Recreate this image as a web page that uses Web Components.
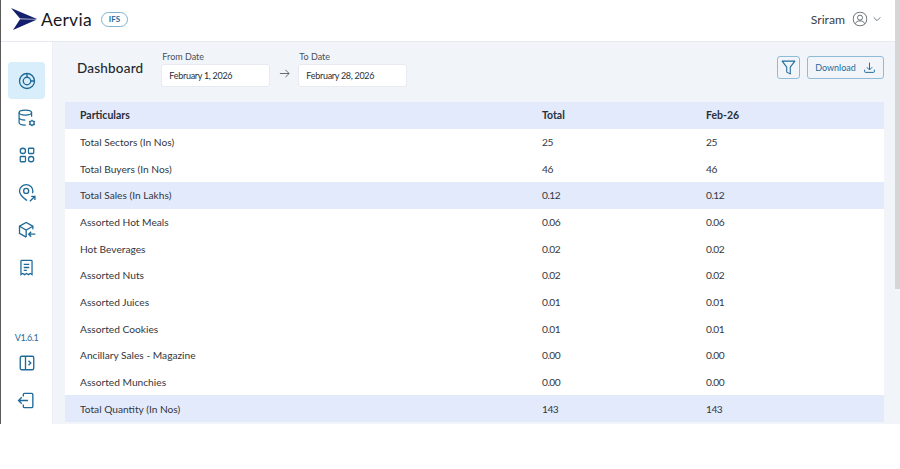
<!DOCTYPE html>
<html>
<head>
<meta charset="utf-8">
<title>Aervia Dashboard</title>
<style>
  html, body { margin: 0; height: 100%; background: #fff; overflow: hidden; }
  body { font-family: "Lato", "Liberation Sans", sans-serif; color: #2b2f36; }
</style>
</head>
<body>
<app-shell>
  <app-header slot="header"></app-header>
  <side-nav slot="nav"></side-nav>
  <dashboard-toolbar></dashboard-toolbar>
  <report-table></report-table>
</app-shell>

<script>
const ICONS = {
  logo: '<svg width="28" height="22" viewBox="0 0 28 22"><path d="M1 0 L27 11 L10 10.4 Z" fill="#14206e"/><path d="M27 11.400 L3 22 L10 11.200 Z" fill="#14206e"/></svg>',
  chart: '<svg viewBox="0 0 24 24" width="20" height="20" fill="none" stroke="currentColor" stroke-width="1.6"><circle cx="12" cy="12" r="9"/><circle cx="12" cy="12" r="4.500"/><path d="M12 3v4.500M16.500 12H21"/></svg>',
  database: '<svg viewBox="0 0 24 24" width="20" height="20" fill="none" stroke="currentColor" stroke-width="1.5"><ellipse cx="10" cy="5.500" rx="7.500" ry="3"/><path d="M2.500 5.500v12c0 1.700 3 3 7 3h1M17.500 5.500v5M2.500 11.500c0 1.700 3.300 3 7.500 3"/><circle cx="18" cy="18" r="2.500"/><path d="M18 14v1.500M18 20.500V22M14.500 16l1.300.800M20.200 19.200l1.300.800M14.500 20l1.300-.800M20.200 16.800l1.300-.800"/></svg>',
  grid: '<svg viewBox="0 0 24 24" width="18" height="18" fill="none" stroke="currentColor" stroke-width="1.700"><circle cx="6.500" cy="6.500" r="3.500"/><rect x="14" y="3" width="7" height="7" rx="1"/><rect x="3" y="14" width="7" height="7" rx="1"/><circle cx="17.500" cy="17.500" r="3.500"/></svg>',
  pin: '<svg viewBox="0 0 24 24" width="20" height="20" fill="none" stroke="currentColor" stroke-width="1.600"><path d="M12 21c-2-1.500-9-6-9-11.500C3 5 7 2 11 2c4.500 0 8 3.300 8 7.500 0 1-.2 2-.5 2.800"/><circle cx="11" cy="9.500" r="3"/><path d="M15.500 22l6-6M17 16h4.500v4.500"/></svg>',
  box: '<svg viewBox="0 0 24 24" width="20" height="20" fill="none" stroke="currentColor" stroke-width="1.600"><path d="M19 11V7.500L11 3 3 7.500v8.500l8 4.500"/><path d="M3 7.500l8 4.500 8-4.500M11 12v8.500"/><path d="M22 17h-8M17 14l-3 3 3 3"/></svg>',
  receipt: '<svg viewBox="0 0 24 24" width="19" height="19" fill="none" stroke="currentColor" stroke-width="1.600"><path d="M5 21V4a1 1 0 0 1 1-1h12a1 1 0 0 1 1 1v17l-2.300-1.500L14.300 21 12 19.500 9.700 21l-2.400-1.500z"/><path d="M8.500 8h7M8.500 12h7M8.500 15.500h4"/></svg>',
  panel: '<svg viewBox="0 0 24 24" width="18" height="18" fill="none" stroke="currentColor" stroke-width="1.800"><rect x="3" y="3" width="18" height="18" rx="2"/><path d="M10 3v18M14 9l3 3-3 3"/></svg>',
  logout: '<svg viewBox="0 0 24 24" width="19" height="19" fill="none" stroke="currentColor" stroke-width="1.700"><path d="M8 7V4.500A1.500 1.500 0 0 1 9.500 3h9A1.500 1.500 0 0 1 20 4.500v15a1.500 1.500 0 0 1-1.500 1.500h-9A1.500 1.500 0 0 1 8 19.500V17"/><path d="M14 12H2M6 8l-4 4 4 4"/></svg>',
  user: '<svg viewBox="0 0 24 24" width="16" height="16" fill="none" stroke="#555b63" stroke-width="1.300"><rect x="2" y="2" width="20" height="20" rx="9"/><circle cx="12" cy="10" r="3.800"/><path d="M5 19c1.200-3 4-4.200 7-4.200s5.800 1.200 7 4.200"/></svg>',
  chevron: '<svg viewBox="0 0 12 12" width="10" height="10" fill="none" stroke="#666c74" stroke-width="1.100"><path d="M2 4l4 4 4-4"/></svg>',
  filter: '<svg viewBox="0 0 24 24" width="17" height="17" fill="none" stroke="#1f6a99" stroke-width="1.500" stroke-linejoin="round"><path d="M3 3h18l-6.500 8.500V21l-5-2.500v-7z"/></svg>',
  download: '<svg viewBox="0 0 24 24" width="13" height="13" fill="none" stroke="#1f6a99" stroke-width="1.800"><path d="M12 3v13M7 11.500l5 5 5-5M3 16v3.500A1.500 1.500 0 0 0 4.500 21h15a1.500 1.500 0 0 0 1.500-1.500V16"/></svg>',
  arrow: '<svg viewBox="0 0 24 24" width="11" height="11" fill="none" stroke="#4a4f57" stroke-width="1.800"><path d="M2 12h20M14 4l8 8-8 8"/></svg>'
};

class AppShell extends HTMLElement {
  constructor() {
    super();
    this.attachShadow({ mode: 'open' });
    this.shadowRoot.innerHTML = `
      <style>
        :host { display: block; height: 424px; border-left: 1px solid #5a5a5a; box-sizing: border-box; position: relative; }
        .frame { display: grid; grid-template-rows: 42px 1fr; height: 100%; }
        .body { display: grid; grid-template-columns: 52px 1fr; min-height: 0; overflow: hidden; }
        main { background: #f1f5fa; padding: 0 16px 0 12px; overflow: hidden; min-width: 0; }
        .scroll { position: absolute; right: 0; top: 0; width: 5px; height: 289px; background: #d6d6d6; }
      </style>
      <div class="frame">
        <slot name="header"></slot>
        <div class="body">
          <slot name="nav"></slot>
          <main><slot></slot></main>
        </div>
      </div>
      <div class="scroll"></div>`;
  }
}

class AppHeader extends HTMLElement {
  constructor() {
    super();
    this.attachShadow({ mode: 'open' });
    this.shadowRoot.innerHTML = `
      <style>
        :host { display: flex; align-items: center; justify-content: space-between; background: #fff; border-bottom: 1px solid #e6eaf0; padding: 0 18px 3px 9px; box-sizing: border-box; height: 42px; }
        .brand, .user { display: flex; align-items: center; }
        .name { font-size: 17.500px; color: #17181c; margin-left: 3px; letter-spacing: .3px; }
        .tag { margin-left: 9px; border: 1px solid #7fb2d3; border-radius: 8px; font-size: 8px; font-weight: 700; color: #1f6a99; width: 27px; height: 15px; box-sizing: border-box; display: flex; align-items: center; justify-content: center; }
        .user span { font-size: 12.200px; color: #3c4046; margin-right: 7px; }
        .user svg:last-child { margin-left: 4px; }
        svg { display: block; }
      </style>
      <div class="brand">${ICONS.logo}<div class="name">Aervia</div><div class="tag">IFS</div></div>
      <div class="user"><span>Sriram</span>${ICONS.user}${ICONS.chevron}</div>`;
  }
}

class SideNav extends HTMLElement {
  constructor() {
    super();
    this.attachShadow({ mode: 'open' });
    const ITEMS = ['chart', 'database', 'grid', 'pin', 'box', 'receipt'];
    this.shadowRoot.innerHTML = `
      <style>
        :host { display: flex; flex-direction: column; align-items: center; background: #fff; padding: 20px 0 5px; box-sizing: border-box; color: #1f6a99; height: 100%; border-right: 1px solid #eceff4; }
        .item { width: 37px; height: 37.400px; border-radius: 4px; display: flex; align-items: center; justify-content: center; }
        .item.active { background: #d9eefb; }
        .stack { display: flex; flex-direction: column; align-items: center; }
        .version { margin-top: auto; font-size: 9px; letter-spacing: -.4px; margin-bottom: 1px; }
        svg { display: block; }
      </style>
      <div class="stack">
        ${ITEMS.map((name, i) => `<div class="item ${i === 0 ? 'active' : ''}">${ICONS[name]}</div>`).join('')}
      </div>
      <div class="version">V1.6.1</div>
      <div class="item">${ICONS.panel}</div>
      <div class="item">${ICONS.logout}</div>`;
  }
}

class DateField extends HTMLElement {
  constructor() {
    super();
    this.attachShadow({ mode: 'open' });
    this.shadowRoot.innerHTML = `
      <style>
        :host { display: block; font-size: 9px; color: #4a4f57; }
        .label { line-height: 12px; margin-bottom: 1px; padding-left: 1px; }
        .box { width: 109px; height: 23px; background: #fff; border: 1px solid #e7ebf1; border-radius: 3px; box-sizing: border-box; display: flex; align-items: center; padding-left: 7px; color: #2b2f36; letter-spacing: -.3px; }
      </style>
      <div class="label">${this.getAttribute('label')}</div>
      <div class="box">${this.getAttribute('value')}</div>`;
  }
}
customElements.define('date-field', DateField);

class DashboardToolbar extends HTMLElement {
  constructor() {
    super();
    this.attachShadow({ mode: 'open' });
    this.shadowRoot.innerHTML = `
      <style>
        :host { display: flex; align-items: flex-start; height: 60px; padding-top: 9px; box-sizing: border-box; }
        h1 { font-size: 13.500px; font-weight: 500; margin: 9px 18px 0 12px; color: #24272c; letter-spacing: .2px; line-height: 17px; }
        .arrow { width: 28px; display: flex; justify-content: center; margin-top: 17px; }
        .actions { margin-left: auto; display: flex; gap: 7px; margin-top: 5px; }
        button { font: inherit; background: transparent; border: 1px solid #8fbbd6; border-radius: 3px; height: 23px; color: #1f6a99; padding: 0; display: flex; align-items: center; justify-content: center; }
        .filter { width: 23px; }
        .download { width: 77px; font-size: 9px; gap: 7px; }
        svg { display: block; }
      </style>
      <h1>Dashboard</h1>
      <date-field label="From Date" value="February 1, 2026"></date-field>
      <div class="arrow">${ICONS.arrow}</div>
      <date-field label="To Date" value="February 28, 2026"></date-field>
      <div class="actions">
        <button class="filter">${ICONS.filter}</button>
        <button class="download">Download ${ICONS.download}</button>
      </div>`;
  }
}

class ReportTable extends HTMLElement {
  constructor() {
    super();
    this.attachShadow({ mode: 'open' });
    const ROWS = [
      ['Total Sectors (In Nos)', '25', '25'],
      ['Total Buyers (In Nos)', '46', '46'],
      ['Total Sales (In Lakhs)', '0.12', '0.12', 1],
      ['Assorted Hot Meals', '0.06', '0.06'],
      ['Hot Beverages', '0.02', '0.02'],
      ['Assorted Nuts', '0.02', '0.02'],
      ['Assorted Juices', '0.01', '0.01'],
      ['Assorted Cookies', '0.01', '0.01'],
      ['Ancillary Sales - Magazine', '0.00', '0.00'],
      ['Assorted Munchies', '0.00', '0.00'],
      ['Total Quantity (In Nos)', '143', '143', 1]
    ];
    this.shadowRoot.innerHTML = `
      <style>
        :host { display: block; font-size: 10.200px; color: #33373d; }
        .row { display: grid; grid-template-columns: 462px 164px 1fr; align-items: center; height: 26.700px; padding-left: 15px; background: #fff; }
        .row.hl { background: #e3eafc; }
        .row.head { font-weight: 700; height: 26.500px; color: #2b2f36; font-size: 10.500px; }
        .num { letter-spacing: -.5px; }
        .head .num { letter-spacing: 0; }
      </style>
      <div class="row hl head"><div>Particulars</div><div class="num">Total</div><div class="num">Feb-26</div></div>
      ${ROWS.map(([name, total, month, hl]) => `<div class="row ${hl ? 'hl' : ''}"><div>${name}</div><div class="num">${total}</div><div class="num">${month}</div></div>`).join('')}`;
  }
}

customElements.define('app-shell', AppShell);
customElements.define('app-header', AppHeader);
customElements.define('side-nav', SideNav);
customElements.define('dashboard-toolbar', DashboardToolbar);
customElements.define('report-table', ReportTable);
</script>
</body>
</html>
